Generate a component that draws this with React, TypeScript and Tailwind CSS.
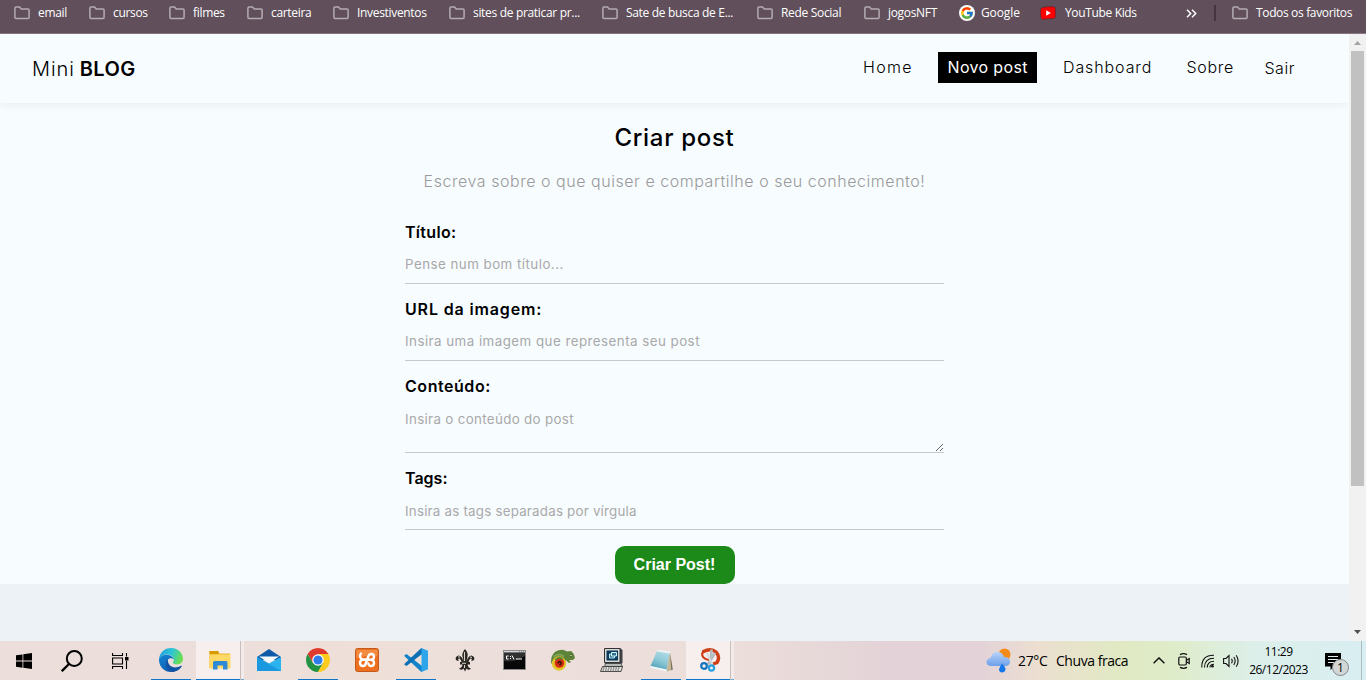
import React from "react";
import { FcGoogle } from "react-icons/fc";

const FolderIcon = () => (
  <svg width="16" height="14" viewBox="0 0 16 14" className="shrink-0" fill="none" stroke="#b4abb1" strokeWidth="1.5">
    <path d="M.9 2.2Q.9 1 2.1 1H5.6L7.2 2.9H14Q15.1 2.9 15.1 4V11.3Q15.1 12.4 14 12.4H2.1Q.9 12.4 .9 11.3Z" />
  </svg>
);

const bookmarks = [
  ["email", "w-[75px]"],
  ["cursos", "w-[80px]"],
  ["filmes", "w-[78px]"],
  ["carteira", "w-[86px]"],
  ["Investiventos", "w-[116px]"],
  ["sites de praticar pr...", "w-[153px]"],
  ["Sate de busca de E...", "w-[155px]"],
  ["Rede Social", "w-[107px]"],
  ["jogosNFT", "w-[95px]"],
];

function BookmarksBar() {
  return (
    <div className="flex h-[34px] shrink-0 items-start border-b border-[#8a7682] bg-[#61505b] pl-[14px] font-['Open_Sans',sans-serif] text-[12px] tracking-[-0.32px] whitespace-nowrap text-white">
      {bookmarks.map(([label, width]) => (
        <div key={label} className={`flex h-[26px] shrink-0 items-center gap-2 ${width}`}>
          <FolderIcon />
          <span>{label}</span>
        </div>
      ))}
      <div className="flex h-[26px] w-[81px] shrink-0 items-center gap-[6px]">
        <span className="flex size-4 items-center justify-center rounded-full bg-white">
          <FcGoogle size={14} />
        </span>
        <span className="tracking-[-0.1px]">Google</span>
      </div>
      <div className="flex h-[26px] w-[146px] shrink-0 items-center gap-[9px]">
        <svg width="16" height="14" viewBox="0 0 16 14">
          <path d="M2.5 1.6Q8 .3 13.5 .7 15 .9 15.3 2.5 15.8 7 15.3 11 15 12.4 13.5 12.5 8 12.7 3 13.4 1.3 13.4 1 11.8 0 7 .8 3.2 1.1 1.8 2.5 1.6Z" fill="#f00" stroke="#3b2931" strokeWidth=".5" />
          <path d="M6.2 4.3V9.7L10.8 7Z" fill="#fff" />
        </svg>
        <span className="tracking-[-0.35px]">YouTube Kids</span>
      </div>
      <div className="flex h-[26px] w-[28px] shrink-0 items-center">
        <svg width="11" height="9" viewBox="0 0 11 9" fill="none" stroke="#fff" strokeWidth="1.5">
          <path d="M1 .8 4.7 4.5 1 8.2M6 .8 9.7 4.5 6 8.2" />
        </svg>
      </div>
      <div className="mt-[5px] mr-4 h-4 w-[2px] shrink-0 bg-[#43343d]" />
      <div className="flex h-[26px] items-center gap-2">
        <FolderIcon />
        <span className="tracking-[-0.35px]">Todos os favoritos</span>
      </div>
    </div>
  );
}

function Navbar() {
  return (
    <nav className="flex h-[69px] shrink-0 items-center justify-between pl-[32px] pr-[54px] text-black shadow-[0_2px_8px_rgba(0,0,0,0.06)]">
      <a className="flex gap-[5px] pt-px text-[20px] leading-6">
        <span className="font-light tracking-[0.9px]">Mini</span>
        <span className="font-semibold tracking-[0.4px]">BLOG</span>
      </a>
      <ul className="flex items-start pb-px text-[16px] leading-[31px] font-light whitespace-nowrap">
        <li className="mr-[25px] w-[51px] pl-px tracking-[1.3px]">Home</li>
        <li className="mr-[25px] w-[99px] bg-black pl-[9.5px] font-normal tracking-[0.35px] text-white">Novo post</li>
        <li className="mr-[35px] w-[89px] pl-[1px] tracking-[0.9px]">Dashboard</li>
        <li className="mr-[31px] w-[47px] pl-[0.5px] tracking-[0.7px]">Sobre</li>
        <li className="w-[31px] pt-px pl-[0.5px] tracking-[0.5px]">Sair</li>
      </ul>
    </nav>
  );
}

const field =
  "block w-full appearance-none border-b border-[#c8c9ca] bg-transparent text-[13.333px] text-black outline-none placeholder:text-[#a9a9a9] placeholder:opacity-100";

function PostForm() {
  return (
    <main className="mx-auto flex w-[539px] flex-col items-center pt-[18px]">
      <h2 className="h-[34px] text-[24px] leading-[34px] font-[550] tracking-[0.7px]">Criar post</h2>
      <p className="mt-[14px] mb-[29px] h-6 text-[16px] leading-6 font-light tracking-[0.54px] whitespace-nowrap text-[#9a9a9a]">
        Escreva sobre o que quiser e compartilhe o seu conhecimento!
      </p>
      <form className="flex w-full flex-col items-center text-[16px] leading-5 font-semibold">
        <label className="mb-[15px] flex w-full flex-col gap-[6px]">
          <span className="tracking-[0.3px]">Título:</span>
          <input className={`${field} h-9 pb-[4px] font-normal tracking-[0.47px]`} placeholder="Pense num bom título..." />
        </label>
        <label className="mb-[15px] flex w-full flex-col gap-[6px]">
          <span className="tracking-[0.85px]">URL da imagem:</span>
          <input className={`${field} h-9 pb-[4px] font-normal tracking-[0.47px]`} placeholder="Insira uma imagem que representa seu post" />
        </label>
        <label className="mb-[15px] flex w-full flex-col gap-[6px]">
          <span className="tracking-[0.55px]">Conteúdo:</span>
          <textarea className={`${field} h-[51px] resize pt-[8px] leading-[18px] font-normal tracking-[0.34px]`} placeholder="Insira o conteúdo do post" />
        </label>
        <label className="mb-4 flex w-full flex-col gap-[6px]">
          <span>Tags:</span>
          <input className={`${field} h-9 pb-[2px] font-normal tracking-[0.22px]`} placeholder="Insira as tags separadas por vírgula" />
        </label>
        <button type="button" className="h-[38px] w-[120px] rounded-[10px] bg-[#1b8a18] font-['Liberation_Sans',Arial,sans-serif] text-[16px] font-bold text-white">
          Criar Post!
        </button>
      </form>
    </main>
  );
}

function Scrollbar() {
  return (
    <div className="flex w-[17px] shrink-0 flex-col items-center bg-[#f1f1f1]">
      <svg width="17" height="17" viewBox="0 0 17 17"><path d="M5 11 8.5 7 12 11Z" fill="#a3a3a3" /></svg>
      <div className="h-[435px] w-[13px] bg-[#c1c1c1]" />
      <svg className="mt-auto" width="17" height="18" viewBox="0 0 17 18"><path d="M5 7 8.5 11 12 7Z" fill="#505050" /></svg>
    </div>
  );
}

const EdgeIcon = () => (
  <svg width="24" height="24" viewBox="0 0 24 24">
    <defs>
      <linearGradient id="edgeTop" x1="0" y1=".2" x2="1" y2=".5"><stop stopColor="#1da0df" /><stop offset=".5" stopColor="#2dc5d5" /><stop offset="1" stopColor="#6be04d" /></linearGradient>
      <linearGradient id="edgeLow" x1="0" y1="0" x2="1" y2="1"><stop stopColor="#1587d8" /><stop offset="1" stopColor="#0d4a99" /></linearGradient>
    </defs>
    <path d="M0 11C.6 4.500 5.800 0 12 0 19 0 24 5 24 10.800 24 14.300 21.300 16.500 18 16.500 15.500 16.500 13.800 15.500 13.800 14.600 13.800 14 14.800 13.700 14.800 12 14.800 8.800 11.500 6.500 8 6.500 4 6.500 1 8.500 0 11Z" fill="url(#edgeTop)" />
    <path d="M0 11C1.200 8.300 4 6.800 7.600 6.800 11.500 6.800 14.500 9.200 14.700 11.500 13.500 10 10.700 9.500 9.200 11.200 7 14.500 9.500 20 15.500 20 18.500 20 20.700 18.800 22 18 23 17.700 22.800 18.200 22.300 18.900 20 22.200 16.200 24 12 24 5 24-.4 18 0 11Z" fill="url(#edgeLow)" />
    <path d="M8.800 11.500C4.800 15 7 22 13 23.900 17 23.500 20.500 21.500 22.500 18.500 23.100 17.500 22.400 17.700 21.800 18.100 14.500 21.800 8.600 17.600 8.800 11.500Z" fill="#1154a6" />
  </svg>
);

const ExplorerIcon = () => (
  <svg width="22" height="19" viewBox="0 0 22 19">
    <path d="M.5 0H9L10.500 2.500H21V17H.5Z" fill="#f0b429" />
    <path d="M.5 0H9L10 1.500 9 3H.5Z" fill="#d99a00" />
    <path d="M.5 3.500H21.500V17.500H.5Z" fill="#ffd966" />
    <path d="M4 18.500V11.500Q4 10 5.500 10H17Q18.500 10 18.500 11.500V18.500H14V14.500H8.500V18.500Z" fill="#2f8ad6" />
  </svg>
);

const MailIcon = () => (
  <svg width="24" height="24" viewBox="0 0 24 24">
    <path d="M0 9 12 1 24 9V12H0Z" fill="#0f5aa8" />
    <path d="M0 9 12 15.500 24 9V23H0Z" fill="#2bb3ef" />
    <path d="M0 9V23H24Z" fill="#1590dc" opacity=".75" />
    <path d="M2 8.500H22L12 15Z" fill="#f6fafb" />
  </svg>
);

const ChromeIcon = () => (
  <svg width="24" height="24" viewBox="0 0 24 24">
    <path d="M12 6H22.390A12 12 0 0 0 1.610 6L6.800 15Z" fill="#de3b2d" />
    <path d="M1.610 6A12 12 0 0 0 12 24L17.200 15 12 12 6.800 15Z" fill="#229342" />
    <path d="M12 6H22.390A12 12 0 0 1 12 24L17.200 15 12 12Z" fill="#fccb1b" />
    <circle cx="12" cy="12" r="5.800" fill="#fff" />
    <circle cx="12" cy="12" r="4.600" fill="#2f7de9" />
  </svg>
);

const XamppIcon = () => (
  <svg width="24" height="24" viewBox="0 0 24 24">
    <rect x=".5" y=".5" width="23" height="23" rx="2" fill="#ee6f1f" stroke="#c35a1d" />
    <path d="M1.500 2H22.500V8Q12 7 1.500 10Z" fill="#f48b43" />
    <path d="M6 5.500Q4.500 7 5.200 9 6 11.500 8.500 11.500 5 12 5 14.800 5 18 8 18 10.300 18 10.700 15.500L13.300 8.500Q14 6 16.200 6 19 6 19 8.800 19 11.300 16.500 11.800 19 12.300 19 15 19 18 16 18 13.800 18 13.300 15.500M8.500 11.500 16.500 11.800" fill="none" stroke="#fff" strokeWidth="2.400" strokeLinejoin="round" strokeLinecap="round" />
  </svg>
);

const VsCodeIcon = () => (
  <svg width="24" height="24" viewBox="0 0 24 24">
    <path d="M0 7.800 2.500 6 18 18V24L16.500 23.300Z" fill="#1384cb" />
    <path d="M0 16.200 2.500 18 18 6V0L16.500 .7Z" fill="#0b70b5" />
    <path d="M17.500 0 24 2.800V21.200L17.500 24Z" fill="#2da5ea" />
  </svg>
);

const FleurIcon = () => (
  <svg width="20" height="23" viewBox="0 0 20 23">
    <path d="M10 0Q13.500 4 12.500 7.500L11.500 12.500Q13 7 16.500 6.500 20 7.500 19.200 10.500 18 12.500 16 11.500 18 9.500 15.500 9.500 13.800 10.500 13.500 13H15V15.500H12.500Q13 19 16 19.500 13.500 22 11.500 19.500L10 22.500 8.500 19.500Q6.500 22 4 19.500 7 19 7.500 15.500H5V13H6.500Q6.200 10.500 4.500 9.500 2 9.500 4 11.500 2 12.500.8 10.500 0 7.500 3.500 6.500 7 7 8.500 12.500L7.500 7.500Q6.500 4 10 0Z" fill="#292622" />
    <path d="M9.500 3V12M3 8 5 8M15 8 17 8.500M7 14.300H11M9.500 16V19" stroke="#d8d4cc" strokeWidth="1.100" fill="none" />
  </svg>
);

const TerminalIcon = () => (
  <svg width="23" height="20" viewBox="0 0 23 20">
    <rect x=".5" y=".5" width="22" height="19" fill="#080808" stroke="#8b8b8b" />
    <path d="M1 1H22V2.500H1Z" fill="#d5d7da" />
    <path d="M16 2H21" stroke="#555" strokeDasharray="1 1" />
    <path d="M1 11Q11 13 22 6V3H1Z" fill="#303030" />
    <path d="M5.500 6H3.500V9H5.500M7.500 6V7M7.500 8V9M9 5.500 11 9.500M13 9H19" stroke="#fff" fill="none" />
  </svg>
);

const ChameleonIcon = () => (
  <svg width="24" height="22" viewBox="0 0 24 22">
    <path d="M0 12Q0 4 7 1.500 12-.5 16 2.500L20 2Q23 4 24 9L22 11H18L20 13 18 14 15 11.500 12 12 5 18Q0 17 0 12Z" fill="#5d8339" />
    <path d="M2.500 8Q7 3.500 13 7.500" stroke="#7fa251" strokeWidth="2" fill="none" />
    <circle cx="8" cy="14.500" r="7.200" fill="#e3c52a" />
    <circle cx="8.500" cy="14" r="4.800" fill="#d62b14" />
    <path d="M4.500 11Q8 7 11.500 10.500" stroke="#5d8339" strokeWidth="2" fill="none" />
    <path d="M7 14.500Q7.500 12 9.700 13 10.800 15 8.500 16" stroke="#2a1708" strokeWidth="1.500" fill="none" />
    <circle cx="20" cy="6.500" r="1.200" fill="#dfe3a5" stroke="#2f441e" strokeWidth=".7" />
  </svg>
);

const ComputerIcon = () => (
  <svg width="25" height="24" viewBox="0 0 25 24">
    <path d="M5 1 20 0 22.500 2V15L20 17H5Z" fill="#3f4346" />
    <path d="M4.500 .5H20V14.500H4.500Z" fill="#d5dad8" stroke="#333" />
    <path d="M6.500 2.500H18V12.500H6.500Z" fill="#0b3b5c" />
    <path d="M9.500 6H14.500V10H9.500Z" fill="#2d6f91" stroke="#b8ecf1" />
    <path d="M11.500 4.500H16.500V8H11.500Z" fill="#2d6f91" stroke="#d8f7fa" />
    <path d="M5 15.500H21L22.500 18.500H5Z" fill="#b6bab8" stroke="#333" strokeWidth=".7" />
    <path d="M2.500 18.500H22.500L21 23.500H.5Z" fill="#e0e1dd" stroke="#292929" strokeWidth=".8" />
    <path d="M3 20H20M2.500 22H19" stroke="#555" strokeDasharray="1.500 1" />
  </svg>
);

const NotepadIcon = () => (
  <svg width="23" height="23" viewBox="0 0 23 23">
    <defs><linearGradient id="pad" x1=".7" y1="0" x2=".3" y2="1"><stop stopColor="#b5dde7" /><stop offset=".5" stopColor="#8fc9d8" /><stop offset="1" stopColor="#4f9fb6" /></linearGradient></defs>
    <path d="M19.500 2.500 22.500 21 16.500 22.500Z" fill="#c3b896" />
    <path d="M20 3 22.800 20.500 21.300 21.300Z" fill="#7c705b" />
    <path d="M7.500 1 20 3 16.500 21 .5 17Z" fill="url(#pad)" />
    <path d="M7.500 .5 20.500 2.500 20 4.500 6.800 2.500Z" fill="#eef2f2" />
    <path d="M.5 17 16.700 20.500 16.500 22.500 0 18.500Z" fill="#f2f8f9" />
  </svg>
);

const SnipIcon = () => (
  <svg width="21" height="24" viewBox="0 0 21 24" fill="none">
    <path d="M2.500 4Q11-.5 16 4 20.500 9 17 14.500L13 16" stroke="#cf3e16" strokeWidth="3.400" />
    <path d="M4 3Q.5 6 3.500 9.500 5.500 11.500 9 12" stroke="#cf3e16" strokeWidth="2.200" />
    <path d="M11.500 1.500 10.500 16M15 5 7.500 17" stroke="#b4bcc1" strokeWidth="2.600" />
    <path d="M7 5 12.500 17" stroke="#d6dbdd" strokeWidth="2" />
    <circle cx="4" cy="18" r="2.800" stroke="#1674bd" strokeWidth="2.200" />
    <circle cx="11.500" cy="20" r="2.600" stroke="#25a0df" strokeWidth="2.200" />
  </svg>
);

const apps = [
  { name: "edge", icon: <EdgeIcon />, open: true },
  { name: "explorer", icon: <ExplorerIcon />, grouped: true },
  { name: "mail", icon: <MailIcon /> },
  { name: "chrome", icon: <ChromeIcon />, open: true },
  { name: "xampp", icon: <XamppIcon /> },
  { name: "vscode", icon: <VsCodeIcon />, open: true },
  { name: "fleur", icon: <FleurIcon /> },
  { name: "terminal", icon: <TerminalIcon /> },
  { name: "chameleon", icon: <ChameleonIcon /> },
  { name: "computer", icon: <ComputerIcon /> },
  { name: "notepad", icon: <NotepadIcon />, open: true },
  { name: "snip", icon: <SnipIcon />, grouped: true },
];

function AppSlot({ icon, open, grouped }: { icon: React.ReactNode; open?: boolean; grouped?: boolean }) {
  if (grouped) {
    return (
      <div className="flex h-full w-[49px]">
        <div className="flex w-[44px] flex-col items-center border-b border-[#0b76cb] bg-white/50">
          <div className="flex flex-1 items-center pl-[4px]">{icon}</div>
        </div>
        <div className="w-px bg-[#c9bdbb]" />
        <div className="w-[3px] border-b border-[#6ea9d8] bg-white/40" />
      </div>
    );
  }
  return (
    <div className="flex h-full w-[49px] flex-col items-center pr-px">
      <div className={`flex w-10 flex-1 items-center justify-center border-b ${open ? "border-[#0b76cb]" : "border-transparent"}`}>{icon}</div>
    </div>
  );
}

function Taskbar() {
  return (
    <div className="flex h-[39px] shrink-0 items-center bg-[linear-gradient(90deg,#ecdedb_0%,#ecdedb_16%,#eee0d7_27%,#ecdfdc_38%,#ecdeda_54%,#e3d3d8_65%,#e3d3d8_72%,#ecdfd0_76%,#e0e9c3_82%,#dfecc9_86%,#dcefea_92%,#d9eef2_100%)] font-['Open_Sans',sans-serif] text-black">
      <div className="flex w-12 items-center justify-center">
        <svg width="16" height="16" viewBox="0 0 16 16"><path d="M0 2.300 6.500 1.400V7.500H0ZM7.300 1.300 16 0V7.500H7.300ZM0 8.400H6.500V14.700L0 13.800ZM7.300 8.400H16V16L7.300 14.800Z" /></svg>
      </div>
      <div className="flex w-12 items-center justify-center">
        <svg width="22" height="22" viewBox="0 0 22 22" fill="none" stroke="#000" strokeWidth="2"><circle cx="13.300" cy="8.500" r="7.500" /><path d="M8 14 .8 21.200" strokeWidth="2.300" /></svg>
      </div>
      <div className="flex w-[51px] items-center pl-[16px]">
        <svg width="17" height="16" viewBox="0 0 17 16" fill="none" stroke="#000" strokeWidth="1.100"><path d="M.6 0V2.500H10.500V0M.6 5H10.500V11H.6ZM.6 16V13.500H10.500V16M14.500 0V3.500M14.500 8V16" /><path d="M13 4H16.500V7.500H13Z" fill="#000" stroke="none" /></svg>
      </div>
      {apps.map(({ name, ...app }) => <AppSlot key={name} {...app} />)}
      <div className="ml-auto flex h-full items-center">
        <svg width="26" height="25" viewBox="0 0 26 25">
          <defs><linearGradient id="cloud" x1="0" y1="0" x2="0" y2="1"><stop stopColor="#b7d3fa" /><stop offset="1" stopColor="#6f9fe9" /></linearGradient></defs>
          <circle cx="18.500" cy="6.500" r="6" fill="#f58b18" />
          <path d="M5 18Q0 17.500 .5 13.500 1 10.500 4.500 10 6 4 11.500 4 16.500 4 18 9 24 9 24 14 23.500 18 19.500 18Z" fill="url(#cloud)" />
          <path d="M16 15.500Q20 20 19.500 21.500 19 24.500 16 24.500 13 24 13 21.500 13.500 19 16 15.500Z" fill="#1778ea" />
        </svg>
        <span className="ml-[6px] w-[38px] text-[14px] tracking-[-0.35px]">27°C</span>
        <span className="w-[97px] text-[14px] tracking-[-0.45px] whitespace-nowrap">Chuva fraca</span>
        <svg width="12" height="7" viewBox="0 0 12 7" fill="none" stroke="#111" strokeWidth="1.400"><path d="M.6 6.300 6 .9 11.400 6.300" /></svg>
        <svg className="ml-[13px]" width="12" height="16" viewBox="0 0 12 16" fill="none" stroke="#111" strokeWidth="1.200"><rect x=".8" y="4" width="7.500" height="8" rx="1.200" /><path d="M8.500 7.300 11.200 5.500V10.500L8.500 8.700M2 1.600Q5.500-.2 9 1.600M2 14.400Q5.500 16.200 9 14.400" /></svg>
        <svg className="ml-[11px]" width="14" height="14" viewBox="0 0 14 14" fill="none" stroke="#111" strokeWidth="1.100"><path d="M.8 13.500Q.5 1 13 1.300M3.500 13.500Q3.500 4.300 13 4.300M6.300 13.500Q6.500 7.300 13 7.300M9 13.500Q9 10.200 13 10.200" /><circle cx="11.500" cy="12.300" r="1.300" fill="#111" stroke="none" /></svg>
        <svg className="ml-[8px]" width="17" height="14" viewBox="0 0 17 14" fill="none" stroke="#111" strokeWidth="1.100"><path d="M.6 4.500H3L6 1.500V12.500L3 9.500H.6ZM8.500 4.800Q10 7 8.500 9.200M10.800 3Q13.500 7 10.800 11M13.200 1.200Q17 7 13.200 12.800" /></svg>
        <div className="ml-[5px] flex w-[67px] flex-col items-center pt-[1px] text-[12px] leading-[18px] tracking-[-0.5px]">
          <span>11:29</span>
          <span>26/12/2023</span>
        </div>
        <div className="relative ml-[13px] flex h-full w-[36px] items-start pt-[12px]">
          <svg width="16" height="17" viewBox="0 0 16 17"><path d="M0 0H16V13.500H9L5.500 17V13.500H0Z" /><path d="M3 3.500H13M3 6.500H13M3 9.500H9" stroke="#dff0ee" strokeWidth="1.200" /></svg>
          <span className="absolute top-[18px] left-[7px] flex size-[17px] items-center justify-center rounded-full border border-[#858888] bg-[#d2d6d6] text-[12px] leading-none">1</span>
        </div>
        <div className="mr-[4px] h-full w-px bg-[#a9bcbf]" />
      </div>
    </div>
  );
}

export default function App() {
  return (
    <div className="flex h-[680px] w-[1366px] flex-col overflow-hidden font-['Inter',sans-serif]">
      <BookmarksBar />
      <div className="flex h-[607px] shrink-0">
        <div className="flex-1 bg-[#edf2f6]">
          <div className="h-[550px] bg-[#f7fcff]">
            <Navbar />
            <PostForm />
          </div>
        </div>
        <Scrollbar />
      </div>
      <Taskbar />
    </div>
  );
}
